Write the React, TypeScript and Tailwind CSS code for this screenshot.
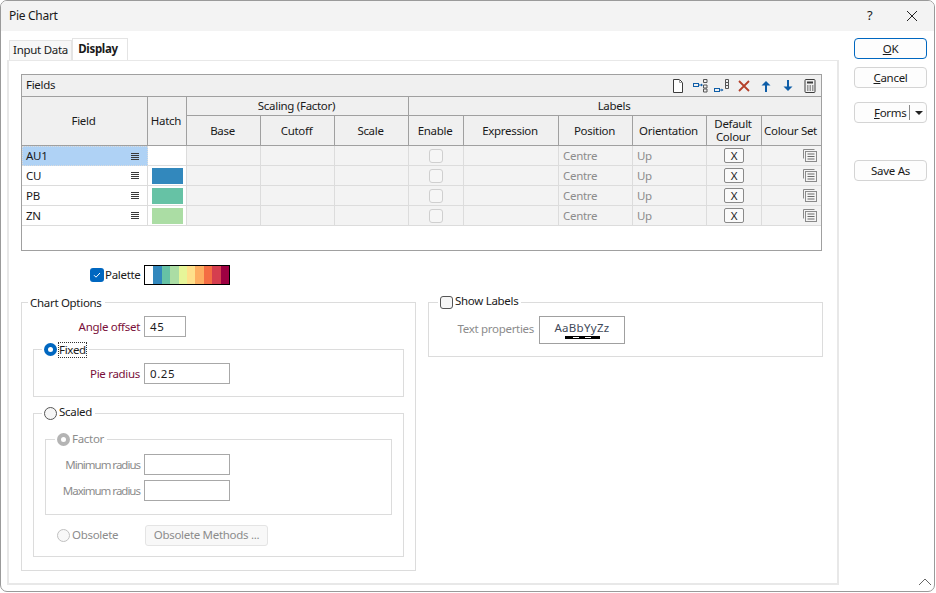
import React from "react";

const cols = "grid grid-cols-[126px_39px_74px_74px_74px_55px_95px_74px_74px_55px_59px]";
const hc = "flex items-center justify-center text-center border-r border-b border-[#a0a0a0] bg-[#f0f0f0] leading-[13px] pr-[2px]";
const bc = "flex items-center border-r border-b border-[#dcdcdc] bg-[#f3f3f3] text-[#8c8c8c]";

function Lines() {
  return (
    <svg width="8" height="9" viewBox="0 0 8 9" className="shrink-0">
      <path d="M0 1.5h8M0 3.5h8M0 5.5h8M0 7.5h8" stroke="#3a3a3a" strokeWidth="1" />
    </svg>
  );
}

function ListIcon() {
  return (
    <svg width="14" height="13" viewBox="0 0 14 13" fill="none" stroke="#8a8a8a">
      <path d="M.5 9.5v-9h11" />
      <path d="M2.5 11.5v-9h11" />
      <rect x="2.5" y="2.5" width="11" height="10" fill="#f3f3f3" />
      <path d="M4.5 5h7M4.5 7.5h7M4.5 10h7" stroke="#6a6a6a" />
    </svg>
  );
}

function Row({ name, color, selected }: { name: string; color?: string; selected?: boolean }) {
  return (
    <div className={cols + " h-5"}>
      <div
        className={
          "flex items-center justify-between pr-2 border-r border-[#dcdcdc] " +
          (selected
            ? "pl-[3px] bg-[#afd2f5] border border-dotted border-[#333333]"
            : "pl-1 bg-white border-b")
        }
      >
        <span className="text-[#1a1a1a]">{name}</span>
        <Lines />
      </div>
      <div className="flex items-center justify-center pl-px bg-white border-r border-b border-[#dcdcdc]">
        {color && <div className="w-[31px] h-4" style={{ backgroundColor: color }} />}
      </div>
      <div className={bc} />
      <div className={bc} />
      <div className={bc} />
      <div className={bc + " justify-center"}>
        <div className="w-[14px] h-[14px] rounded-[3px] border border-[#cfcfcf] bg-[#f6f6f6]" />
      </div>
      <div className={bc} />
      <div className={bc + " pl-1"}>Centre</div>
      <div className={bc + " pl-1"}>Up</div>
      <div className={bc + " justify-center"}>
        <div className="w-5 h-[15px] rounded-[2px] border border-[#8a8a8a] bg-[#fafafa] flex items-center justify-center text-[#1a1a1a]">
          X
        </div>
      </div>
      <div className="flex items-center justify-end pr-[4px] border-b border-[#dcdcdc] bg-[#f3f3f3]">
        <ListIcon />
      </div>
    </div>
  );
}

function Toolbar() {
  return (
    <div className="flex items-center gap-[6px] pr-[3px]">
      <svg width="16" height="16" viewBox="0 0 16 16" fill="none" stroke="#3c3c3c">
        <path d="M3.5 1.5h6l3 3v10h-9z" fill="#fff" />
        <path d="M9.5 1.5v3h3" stroke="#9a9a9a" />
      </svg>
      <svg width="16" height="16" viewBox="0 0 16 16" fill="none">
        <rect x="1.5" y="5.5" width="5" height="3" stroke="#0f5ea8" />
        <path d="M6 7h3.5" stroke="#0f5ea8" />
        <path d="M9 5.5l2 1.5-2 1.5z" fill="#0f5ea8" />
        <path d="M11.5 1.5h3.5v3h-3.5zM11.5 7h3.5v3h-3.5zM11.5 11h3.5v3h-3.5z" stroke="#555555" />
      </svg>
      <svg width="16" height="16" viewBox="0 0 16 16" fill="none">
        <rect x="0.5" y="10.5" width="5" height="3" stroke="#0f5ea8" />
        <path d="M5 12h3" stroke="#0f5ea8" />
        <path d="M7.5 10.5l2 1.5-2 1.5z" fill="#0f5ea8" />
        <path d="M11.5 1.5h3v3h-3zM11.5 4.5h3v3h-3zM11.5 7.5h3v3h-3z" stroke="#555555" />
      </svg>
      <svg width="16" height="16" viewBox="0 0 16 16" fill="none">
        <path d="M3 3l10 10M13 3L3 13" stroke="#b5402a" strokeWidth="1.8" />
      </svg>
      <svg width="16" height="16" viewBox="0 0 16 16" fill="none">
        <path d="M8 14V4" stroke="#0f5ea8" strokeWidth="2" />
        <path d="M3.5 7.5L8 3l4.5 4.5z" fill="#0f5ea8" />
      </svg>
      <svg width="16" height="16" viewBox="0 0 16 16" fill="none">
        <path d="M8 2v10" stroke="#0f5ea8" strokeWidth="2" />
        <path d="M3.5 8.5L8 13l4.5-4.5z" fill="#0f5ea8" />
      </svg>
      <svg width="16" height="16" viewBox="0 0 16 16" fill="none" stroke="#3c3c3c">
        <rect x="3" y="1.5" width="10" height="13" rx="1" />
        <rect x="5" y="3.5" width="6" height="2" fill="#3c3c3c" stroke="none" />
        <path d="M5 8h1.5M7.5 8H9M10 8h1.5M5 10h1.5M7.5 10H9M10 10h1.5M5 12h1.5M7.5 12H9M10 12h1.5" strokeWidth="1.2" />
      </svg>
    </div>
  );
}

function Radio({ state }: { state: "on" | "off" | "disabledOn" | "disabledOff" }) {
  if (state === "on")
    return <div className="w-[13px] h-[13px] rounded-full bg-[#0067c0] flex items-center justify-center"><div className="w-[5px] h-[5px] rounded-full bg-white" /></div>;
  if (state === "disabledOn")
    return <div className="w-[13px] h-[13px] rounded-full bg-[#b4b4b4] flex items-center justify-center"><div className="w-[5px] h-[5px] rounded-full bg-white" /></div>;
  return (
    <div
      className={
        "w-[13px] h-[13px] rounded-full border " +
        (state === "off" ? "border-[#555555] bg-[#f6f6f6]" : "border-[#c0c0c0] bg-[#f8f8f8]")
      }
    />
  );
}

function Legend({ children, className }: { children: React.ReactNode; className: string }) {
  return <div className={"absolute -top-[8px] flex items-center gap-[2px] bg-white pl-[2px] pr-[3px] h-[15px] " + className}>{children}</div>;
}

function Field({ label, value, w, dim }: { label: string; value?: string; w: string; dim?: boolean }) {
  return (
    <div className="flex items-center gap-1">
      <div className={"w-[117px] text-right " + (dim ? "text-[#8c8c8c] tracking-[-1px]" : "text-[#7a0f3a]")}>{label}</div>
      <div className={"h-[21px] border border-[#a8a8a8] bg-white pl-[5px] flex items-center text-[#1a1a1a] tracking-[0.6px] " + w}>{value}</div>
    </div>
  );
}

function Btn({ children, primary }: { children: React.ReactNode; primary?: boolean }) {
  return (
    <div
      className={
        "h-[21px] w-[73px] rounded-[4px] flex items-center justify-center border bg-[#fdfdfd] text-[#1a1a1a] " +
        (primary ? "border-[#0067c0]" : "border-[#d4d4d4]")
      }
    >
      {children}
    </div>
  );
}

const palette = ["#ffffff", "#3288bd", "#66c2a5", "#abdda4", "#e6f598", "#fee08b", "#fdae61", "#f46d43", "#d53e4f", "#9e0142"];

export default function App() {
  return (
    <div
      className="relative w-[936px] h-[593px] overflow-hidden bg-white text-[11.5px] text-[#1a1a1a] tracking-[-0.3px]"
      style={{ fontFamily: '"Noto Sans", sans-serif' }}
    >
      <div className="w-[935px] h-[592px] rounded-[7px] overflow-hidden bg-white border border-[#9a9a9a]">
        <div className="h-[30px] bg-[#f3f3f3] flex items-center pl-[8px]">
          <span className="flex-1 text-[12px]">Pie Chart</span>
          <span className="w-[14px] text-[13px]">?</span>
          <svg width="12" height="12" viewBox="0 0 12 12" className="ml-[25px] mr-[16px]" fill="none" stroke="#222222">
            <path d="M1 1l10 10M11 1L1 11" />
          </svg>
        </div>
        <div className="flex">
          <div className="w-[846px] pl-[6px] pt-[7px]">
            <div className="flex items-end pl-[2px] h-[22px]">
              <div className="h-[20px] w-[63px] pb-[2px] flex items-center justify-center border border-b-0 border-[#e4e4e4] bg-[#f7f7f7]">Input Data</div>
              <div className="h-[22px] w-[56px] pb-[2px] pr-[4px] flex items-center justify-center border border-b-0 border-[#e4e4e4] bg-white font-bold">Display</div>
            </div>
            <div className="w-[832px] h-[525px] border-2 border-t border-[#e8e8e8] pl-[12px] pt-[13px]">
              <div className="w-[801px] h-[177px] border border-[#a0a0a0] bg-white">
                <div className="h-[22px] bg-[#f0f0f0] border-b border-[#a0a0a0] flex items-center justify-between pl-1">
                  <span className="pb-[2px]">Fields</span>
                  <Toolbar />
                </div>
                <div className={cols + " grid-rows-[19px_30px]"}>
                  <div className={hc + " row-span-2 pb-[2px]"}>Field</div>
                  <div className={hc + " row-span-2 pb-[2px]"}>Hatch</div>
                  <div className={hc + " col-span-3 pb-[2px]"}>Scaling (Factor)</div>
                  <div className={hc + " col-span-6 border-r-0 pb-[2px]"}>Labels</div>
                  <div className={hc}>Base</div>
                  <div className={hc}>Cutoff</div>
                  <div className={hc}>Scale</div>
                  <div className={hc}>Enable</div>
                  <div className={hc}>Expression</div>
                  <div className={hc}>Position</div>
                  <div className={hc}>Orientation</div>
                  <div className={hc + " pb-[2px]"}>Default<br />Colour</div>
                  <div className={hc + " border-r-0"}>Colour Set</div>
                </div>
                <Row name="AU1" selected />
                <Row name="CU" color="#3288bd" />
                <Row name="PB" color="#66c2a5" />
                <Row name="ZN" color="#abdda4" />
              </div>

              <div className="flex items-center h-5 mt-[14px] pl-[69px]">
                <div className="w-[14px] h-[14px] rounded-[3px] bg-[#0067c0] flex items-center justify-center">
                  <svg width="10" height="10" viewBox="0 0 10 10" fill="none" stroke="#ffffff"><path d="M2 5.2l2 2 4-4.2" /></svg>
                </div>
                <span className="ml-[1px] w-[39px]">Palette</span>
                <div className="flex w-[86px] h-5 border border-black">
                  {palette.map((c) => (
                    <div key={c} className="flex-1" style={{ backgroundColor: c }} />
                  ))}
                </div>
              </div>

              <div className="flex gap-3 mt-[17px] items-start">
                <div className="relative w-[395px] h-[269px] border border-[#dcdcdc] pl-[1px]">
                  <Legend className="left-[6px]"><span>Chart Options</span></Legend>
                  <div className="pt-[13px]">
                    <Field label="Angle offset" value="45" w="w-[42px]" />
                  </div>
                  <div className="relative ml-[11px] mr-[10px] mt-[12px] h-[48px] border border-[#dcdcdc] -translate-x-[1px]">
                    <Legend className="left-[8px]">
                      <Radio state="on" />
                      <span className="outline-1 outline-dotted outline-[#333333] leading-[14px]">Fixed</span>
                    </Legend>
                    <div className="pt-[13px] -ml-[11px]">
                      <Field label="Pie radius" value="0.25" w="w-[86px]" />
                    </div>
                  </div>
                  <div className="relative ml-[11px] mr-[10px] mt-[16px] h-[144px] border border-[#dcdcdc] -translate-x-[1px]">
                    <Legend className="left-[8px]">
                      <Radio state="off" />
                      <span className="pb-[3px]">Scaled</span>
                    </Legend>
                    <div className="relative ml-[11px] mr-[11px] mt-[25px] h-[76px] border border-[#dcdcdc]">
                      <Legend className="left-[9px] text-[#8c8c8c]">
                        <Radio state="disabledOn" />
                        <span className="pb-[2px]">Factor</span>
                      </Legend>
                      <div className="pt-[14px] -ml-[23px] flex flex-col gap-[5px]">
                        <Field dim label="Minimum radius" w="w-[86px]" />
                        <Field dim label="Maximum radius" w="w-[86px]" />
                      </div>
                    </div>
                    <div className="flex items-center ml-[23px] mt-[9px] h-[22px] text-[#8c8c8c]">
                      <Radio state="disabledOff" />
                      <span className="ml-[2px] w-[73px]">Obsolete</span>
                      <div className="w-[123px] h-[21px] rounded-[3px] border border-[#e4e4e4] bg-[#f8f8f8] flex items-center justify-center">Obsolete Methods ...</div>
                    </div>
                  </div>
                </div>

                <div className="relative w-[395px] h-[55px] border border-[#dcdcdc]">
                  <Legend className="left-[9px]">
                    <div className="w-[13px] h-[13px] rounded-[3px] border border-[#555555] bg-[#f6f6f6]" />
                    <span className="pb-[3px]">Show Labels</span>
                  </Legend>
                  <div className="flex items-center pt-[13px]">
                    <div className="w-[105px] text-right text-[#8c8c8c] pb-[2px]">Text properties</div>
                    <div className="ml-[5px] w-[86px] h-[28px] border border-[#a0a0a0] flex flex-col items-center justify-center text-[#3f4a5a]">
                      <span className="leading-[14px] tracking-[0.3px]">AaBbYyZz</span>
                      <div className="w-[35px] h-[3px] bg-black flex items-center justify-center gap-[6px] mt-[1px]">
                        <div className="w-[6px] h-px bg-white" />
                        <div className="w-[6px] h-px bg-white" />
                      </div>
                    </div>
                  </div>
                </div>
              </div>
            </div>
          </div>
          <div className="pl-[7px] pt-[7px] flex flex-col">
            <Btn primary><span><u>O</u>K</span></Btn>
            <div className="mt-2"><Btn><span><u>C</u>ancel</span></Btn></div>
            <div className="mt-[14px]">
              <div className="relative h-[21px] w-[73px] rounded-[4px] flex items-center border border-[#d4d4d4] bg-[#fdfdfd]">
                <span className="ml-[19px] w-[35px]"><u>F</u>orms</span>
                <div className="w-px h-[15px] bg-[#8a8a8a]" />
                <svg width="8" height="4" viewBox="0 0 8 4" className="ml-[5px]"><path d="M0 0h8L4 4z" fill="#222222" /></svg>
              </div>
            </div>
            <div className="mt-[37px]"><Btn>Save As</Btn></div>
          </div>
        </div>
      </div>
      <svg width="14" height="8" viewBox="0 0 14 8" className="absolute left-[918px] top-[578px]" fill="none" stroke="#666666">
        <path d="M1 7l6-6 6 6" />
      </svg>
    </div>
  );
}
